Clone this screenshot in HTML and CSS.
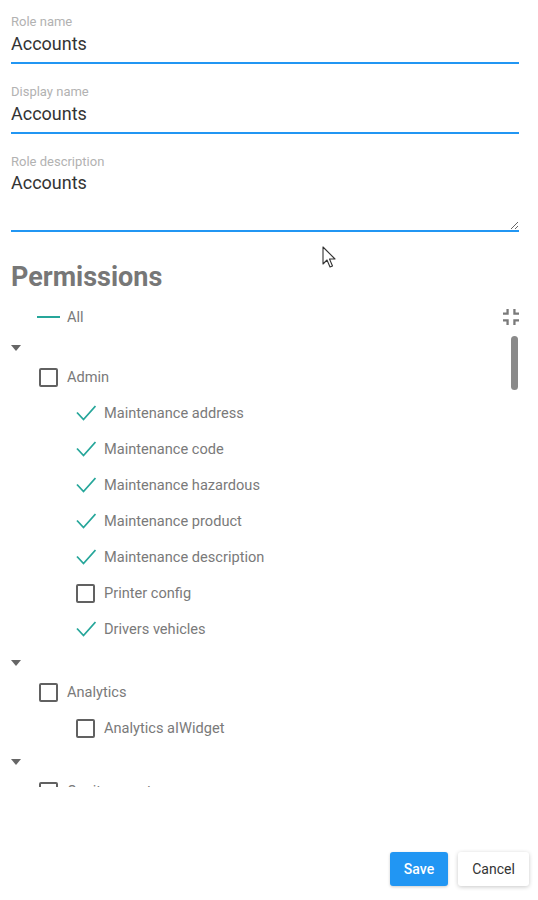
FILE: index.html
```html
<!DOCTYPE html>
<html lang="en">
<head>
<meta charset="utf-8">
<title>Role</title>
<link rel="stylesheet" href="styles.css">
</head>
<body>
<div class="page">
  <div class="form">
    <div class="field">
      <label class="field-label">Role name</label>
      <input class="field-input" type="text" value="Accounts">
    </div>
    <div class="field">
      <label class="field-label">Display name</label>
      <input class="field-input" type="text" value="Accounts">
    </div>
    <div class="field">
      <label class="field-label">Role description</label>
      <textarea class="field-textarea">Accounts</textarea>
    </div>

    <h2 class="heading">Permissions</h2>

    <div class="all-row">
      <span class="dash"></span>
      <span class="node-text">All</span>
      <svg class="compress" viewBox="5 5 14 14" width="16" height="16"><path fill="#7a7a7a" d="M5 16h3v3h2v-5H5v2zm3-8H5v2h5V5H8v3zm6 11h2v-3h3v-2h-5v5zm2-11V5h-2v5h5V8h-3z"/></svg>
    </div>

    <div class="tree">
      <div class="caret-row"><span class="caret"></span></div>
      <div class="node lvl1"><span class="slot"><span class="box"></span></span><span class="node-text">Admin</span></div>
      <div class="node lvl2"><span class="slot"><svg class="check" viewBox="0 0 20 18" width="20" height="18"><path d="M1 8.5l6.5 7L19.5 2"/></svg></span><span class="node-text">Maintenance address</span></div>
      <div class="node lvl2"><span class="slot"><svg class="check" viewBox="0 0 20 18" width="20" height="18"><path d="M1 8.5l6.5 7L19.5 2"/></svg></span><span class="node-text">Maintenance code</span></div>
      <div class="node lvl2"><span class="slot"><svg class="check" viewBox="0 0 20 18" width="20" height="18"><path d="M1 8.5l6.5 7L19.5 2"/></svg></span><span class="node-text">Maintenance hazardous</span></div>
      <div class="node lvl2"><span class="slot"><svg class="check" viewBox="0 0 20 18" width="20" height="18"><path d="M1 8.5l6.5 7L19.5 2"/></svg></span><span class="node-text">Maintenance product</span></div>
      <div class="node lvl2"><span class="slot"><svg class="check" viewBox="0 0 20 18" width="20" height="18"><path d="M1 8.5l6.5 7L19.5 2"/></svg></span><span class="node-text">Maintenance description</span></div>
      <div class="node lvl2"><span class="slot"><span class="box"></span></span><span class="node-text">Printer config</span></div>
      <div class="node lvl2"><span class="slot"><svg class="check" viewBox="0 0 20 18" width="20" height="18"><path d="M1 8.5l6.5 7L19.5 2"/></svg></span><span class="node-text">Drivers vehicles</span></div>
      <div class="caret-row"><span class="caret"></span></div>
      <div class="node lvl1"><span class="slot"><span class="box"></span></span><span class="node-text">Analytics</span></div>
      <div class="node lvl2"><span class="slot"><span class="box"></span></span><span class="node-text">Analytics aIWidget</span></div>
      <div class="caret-row"><span class="caret"></span></div>
      <div class="node lvl1"><span class="slot"><span class="box"></span></span><span class="node-text">Onsite reports</span></div>
      <span class="thumb"></span>
    </div>
  </div>

  <div class="footer">
    <button class="btn btn-save" type="button">Save</button>
    <button class="btn btn-cancel" type="button">Cancel</button>
  </div>

  <svg class="cursor" viewBox="0 0 14 22" width="14" height="22"><path d="M1 1v17l4-4 3 7 2.5-1-3-7H13z" fill="#fff" stroke="#333" stroke-width="1.1" stroke-linejoin="round"/></svg>
</div>
</body>
</html>
```

FILE: styles.css
```css
* { box-sizing: border-box; }

html, body {
  margin: 0;
  padding: 0;
  background: #fff;
}

body {
  font-family: Roboto, "Liberation Sans", sans-serif;
  color: #333;
}

.page {
  position: relative;
  width: 538px;
  height: 900px;
  padding: 14px 9px 0 11px;
}

.form {
  margin-right: 10px;
}

.field {
  margin-bottom: 20px;
}

.field-label {
  display: block;
  font-size: 13px;
  line-height: 16px;
  color: #b2b2b2;
  margin-bottom: 1px;
}

.field-input {
  display: block;
  width: 100%;
  height: 33px;
  padding: 0 0 7px 0;
  margin: 0;
  border: none;
  border-bottom: 2px solid #2196f3;
  font-family: Roboto, "Liberation Sans", sans-serif;
  font-size: 18px;
  line-height: 24px;
  color: #333;
  outline: none;
  background: transparent;
}

.field-textarea {
  display: block;
  width: 100%;
  height: 61px;
  padding: 0;
  margin: 0;
  border: none;
  border-bottom: 2px solid #2196f3;
  font-family: Roboto, "Liberation Sans", sans-serif;
  font-size: 18px;
  line-height: 24px;
  color: #333;
  outline: none;
  background: transparent;
}

.heading {
  margin: 29px 0 9px 0;
  font-size: 27px;
  line-height: 32px;
  font-weight: 700;
  color: #777;
}

.all-row {
  display: flex;
  align-items: center;
  height: 30px;
  padding-left: 26px;
}

.dash {
  width: 23px;
  height: 2px;
  background: #26a69a;
  margin-right: 7px;
}

.compress {
  margin-left: auto;
}

.node-text {
  font-size: 14.6px;
  line-height: 20px;
  color: #7a7a7a;
}

.tree {
  position: relative;
  height: 455px;
  overflow: hidden;
}

.caret-row {
  height: 27px;
  padding-top: 13px;
}

.caret {
  display: block;
  width: 0;
  height: 0;
  border-left: 5px solid transparent;
  border-right: 5px solid transparent;
  border-top: 6px solid #666;
}

.node {
  display: flex;
  align-items: center;
  height: 36px;
}

.lvl1 { padding-left: 28px; }
.lvl2 { padding-left: 65px; }

.slot {
  display: flex;
  align-items: center;
  width: 28px;
  height: 20px;
}

.box {
  display: block;
  width: 19px;
  height: 19px;
  border: 2px solid #616161;
  border-radius: 2px;
}

.check {
  display: block;
  fill: none;
  stroke: #26a69a;
  stroke-width: 1.8;
}

.thumb {
  position: absolute;
  top: 4px;
  right: 1px;
  width: 7px;
  height: 54px;
  border-radius: 4px;
  background: #8a8a8a;
}

.footer {
  display: flex;
  justify-content: flex-end;
  gap: 10px;
  margin-top: 65px;
}

.btn {
  height: 34px;
  border: none;
  border-radius: 3px;
  font-family: Roboto, "Liberation Sans", sans-serif;
  font-size: 14px;
  cursor: pointer;
}

.btn-save {
  width: 58px;
  background: #2196f3;
  color: #fff;
  font-weight: 500;
  box-shadow: 0 1px 3px rgba(0, 0, 0, 0.2);
}

.btn-cancel {
  width: 71px;
  background: #fff;
  color: #333;
  box-shadow: 0 1px 4px rgba(0, 0, 0, 0.22);
}

.cursor {
  position: absolute;
  left: 322px;
  top: 246px;
}
```
